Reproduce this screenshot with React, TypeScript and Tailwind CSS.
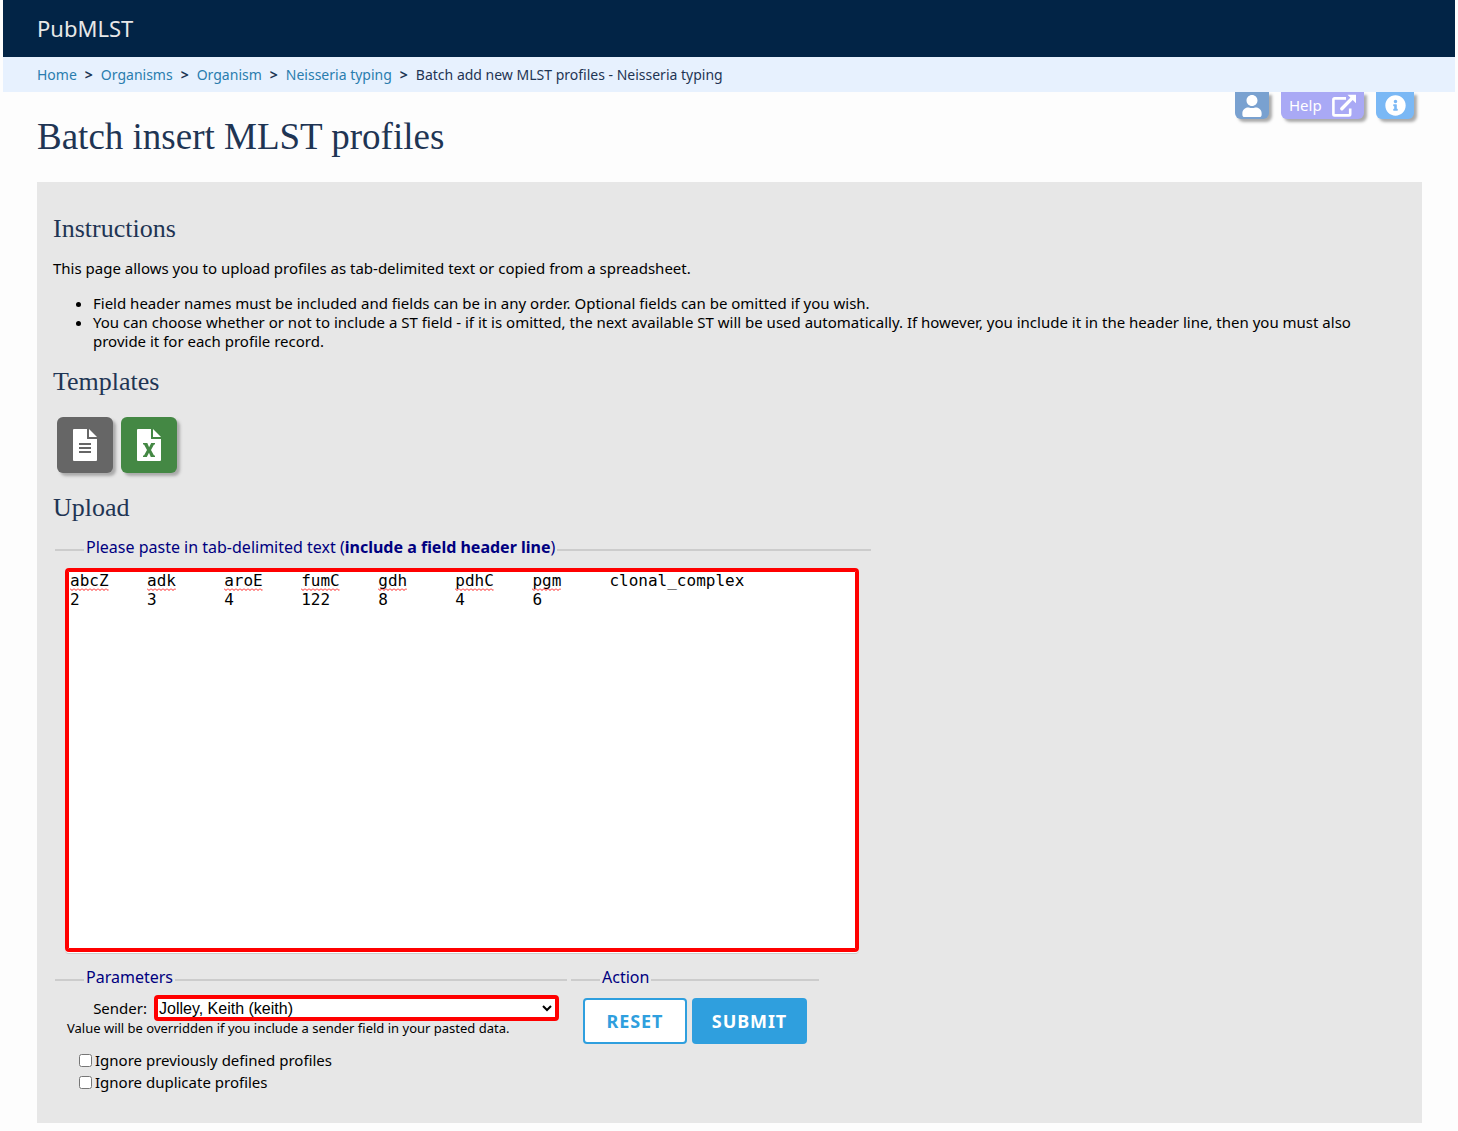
import React from "react";
import { FaUser, FaInfoCircle } from "react-icons/fa";

const sequence = ["abcZ", "adk", "aroE", "fumC", "gdh", "pdhC", "pgm"];
const pasted = sequence.join("\t") + "\tclonal_complex\n" + ["2", "3", "4", "122", "8", "4", "6"].join("\t");

const crumbs = ["Home", "Organisms", "Organism", "Neisseria typing"];

function Squiggle({ chars }: { chars: number }) {
  return (
    <span className="block w-[8ch]">
      <svg className="block h-[3px]" style={{ width: `${chars}ch` }} aria-hidden="true">
        <defs>
          <pattern id="wave" width="4" height="3" patternUnits="userSpaceOnUse">
            <path d="M-1 0.5L0 0.5L2 2.5L4 0.5L5 0.5" fill="none" stroke="#f00" strokeWidth="0.9" />
          </pattern>
        </defs>
        <rect width="100%" height="3" fill="url(#wave)" />
      </svg>
    </span>
  );
}

function ExternalIcon() {
  return (
    <svg viewBox="0 0 24 24" className="size-6" aria-hidden="true">
      <path d="M14 4.4H2.6Q1.4 4.4 1.4 5.6V20.2Q1.4 21.4 2.6 21.4H17Q18.2 21.4 18.2 20.2V14.5" fill="none" stroke="#fff" strokeWidth="2.6" />
      <path d="M9.8 14.7L20 4.4" stroke="#fff" strokeWidth="3.4" strokeLinecap="round" />
      <path d="M15.5 0.8H24V9.3Z" fill="#fff" />
    </svg>
  );
}

function FileIcon({ excel }: { excel?: boolean }) {
  return (
    <svg viewBox="0 0 24 32" className="h-8 w-6" aria-hidden="true">
      <path d="M1 0H14V9.5Q14 10 14.5 10H24V31Q24 32 23 32H1Q0 32 0 31V1Q0 0 1 0Z" fill="#fff" />
      <path d="M16 0L24 8H16Z" fill="#fff" />
      {excel ? (
        <path d="M6 14H10.3L12.1 18.2L14.2 14H18V15.6H17L14 21L17 26.4H18V28H13.8L12 23.8L9.8 28H6V26.4H7L10 21L7 15.6H6Z" fill="#448844" />
      ) : (
        <path d="M6 15H18M6 19H18M6 23H18" stroke="#666" strokeWidth="2" />
      )}
    </svg>
  );
}

function Section({ legend, className, children }: { legend: React.ReactNode; className: string; children: React.ReactNode }) {
  return (
    <fieldset className="border-t-2 border-[#ccc]">
      <legend className="ml-[29px] px-[2px] pb-[5px] text-base leading-6 text-[#000080]">{legend}</legend>
      <div className={className}>{children}</div>
    </fieldset>
  );
}

const h2 = "font-['Liberation_Serif',serif] text-[26px] leading-[30px] text-[#1f3554]";
const tab = "flex h-[27px] items-center rounded-b-md text-white shadow-[3px_3px_3px_#aaa]";
const tile = "flex size-14 items-center justify-center rounded-md shadow-[3px_3px_3px_#aaa]";

export default function App() {
  return (
    <div className="min-h-screen bg-[#fdfdfd] px-[3px] pb-2 font-['Noto_Sans',sans-serif] text-[15px] leading-[19px] text-black">
      <header className="flex h-[57px] items-center bg-[#022446] pl-[34px] text-[22px] text-[#e8e8e8]">PubMLST</header>
      <nav aria-label="Breadcrumb" className="h-[35px] bg-[#e7f1fe] pl-[34px] text-sm leading-[35px] text-[#1f3554]">
        <ol className="flex gap-2">
          {crumbs.map((c) => (
            <li key={c} className="flex gap-2">
              <a href="#" className="text-[#2a7dae]">{c}</a>
              <b>&gt;</b>
            </li>
          ))}
          <li aria-current="page">Batch add new MLST profiles - Neisseria typing</li>
        </ol>
      </nav>

      <main className="pr-[33px] pl-[34px]">
        <div className="flex h-[90px] items-start justify-between">
          <h1 className="pt-6 font-['Liberation_Serif',serif] text-[37px] leading-[42px] text-[#1f3554]">Batch insert MLST profiles</h1>
          <div className="flex pr-2">
            <button aria-label="User" className={`${tab} mr-3 w-[34px] justify-center bg-[#79a1d0]`}>
              <FaUser className="size-[22px]" />
            </button>
            <a href="#" className={`${tab} mr-3 w-[83px] justify-between bg-[#a9a9f5] px-2`}>
              Help
              <ExternalIcon />
            </a>
            <button aria-label="Information" className={`${tab} w-[38px] justify-center bg-[#7ab8f5]`}>
              <FaInfoCircle className="size-[21px]" />
            </button>
          </div>
        </div>

        <div className="bg-[#e7e7e7] px-4 pt-8 pb-[31px]">
          <h2 className={h2}>Instructions</h2>
          <p className="mt-[15px]">This page allows you to upload profiles as tab-delimited text or copied from a spreadsheet.</p>
          <ul className="mt-4 list-disc pr-12 pl-10">
            <li>Field header names must be included and fields can be in any order. Optional fields can be omitted if you wish.</li>
            <li>You can choose whether or not to include a ST field - if it is omitted, the next available ST will be used automatically. If however, you include it in the header line, then you must also provide it for each profile record.</li>
          </ul>
          <h2 className={`mt-4 ${h2}`}>Templates</h2>
          <div className="mt-5 ml-1 flex gap-2">
            <a href="#" aria-label="Tab-delimited template" className={`${tile} bg-[#666]`}><FileIcon /></a>
            <a href="#" aria-label="Excel template" className={`${tile} bg-[#448844]`}><FileIcon excel /></a>
          </div>
          <h2 className={`mt-5 ${h2}`}>Upload</h2>

          <form className="mt-3 ml-[2px]" onSubmit={(e) => e.preventDefault()}>
            <div className="flex">
              <Section className="pt-1 pr-3 pl-[10px]" legend={<label htmlFor="data">Please paste in tab-delimited text (<b>include a field header line</b>)</label>}>
                <div className="relative">
                  <textarea
                    id="data"
                    spellCheck={false}
                    defaultValue={pasted}
                    className="block h-[384px] w-[794px] resize-none rounded-sm border-3 border-[#f00] bg-white pl-[2px] font-['DejaVu_Sans_Mono',monospace] text-base leading-[19px] shadow-[inset_0_0_0_1px_#f00,0_1px_#fff,0_2px_#ccc] outline-none [tab-size:8]"
                  />
                  <div className="pointer-events-none absolute top-5 left-[5px] flex font-['DejaVu_Sans_Mono',monospace] text-base">
                    {sequence.map((s) => <Squiggle key={s} chars={s.length} />)}
                  </div>
                </div>
              </Section>
            </div>

            <div className="mt-[13px] flex gap-1">
              <Section className="w-[512px] pt-px pl-3" legend="Parameters">
                <div className="flex items-center">
                  <label htmlFor="sender" className="w-20 text-right">Sender:</label>
                  <select id="sender" className="ml-[7px] h-[26px] w-[405px] rounded-sm border-4 border-l border-[#f00] bg-white font-['Liberation_Sans',sans-serif] text-base leading-[18px] shadow-[inset_3px_0_0_0_#f00]">
                    <option>Jolley, Keith (keith)</option>
                  </select>
                </div>
                <p className="text-[13px] leading-[14px]">Value will be overridden if you include a sender field in your pasted data.</p>
                <div className="mt-4 ml-3 flex flex-col gap-[3px]">
                  <label className="flex items-center gap-[3px]"><input type="checkbox" className="size-[13px]" />Ignore previously defined profiles</label>
                  <label className="flex items-center gap-[3px]"><input type="checkbox" className="size-[13px]" />Ignore duplicate profiles</label>
                </div>
              </Section>
              <Section className="w-[248px] px-3 pt-1" legend="Action">
                <div className="flex gap-[5px] text-lg font-bold tracking-wider">
                  <button type="reset" className="h-[46px] w-[104px] rounded border-2 border-[#2f9fde] bg-white text-[#2f9fde]">RESET</button>
                  <button type="submit" className="h-[46px] w-[115px] rounded bg-[#2f9fde] text-white">SUBMIT</button>
                </div>
              </Section>
            </div>
          </form>
        </div>
      </main>
    </div>
  );
}
